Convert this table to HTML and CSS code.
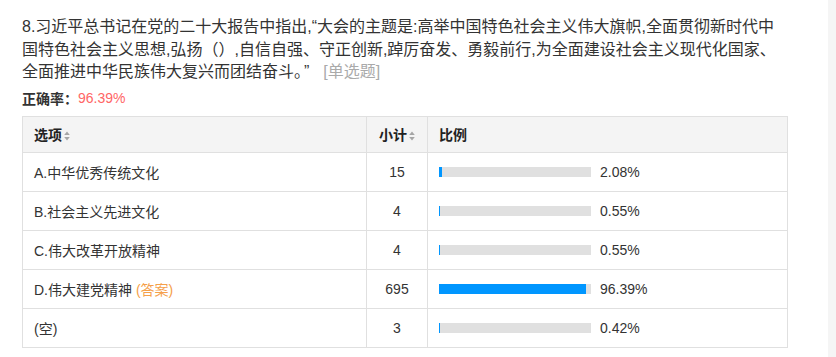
FILE: index.html
```html
<!DOCTYPE html>
<html lang="zh-CN">
<head>
<meta charset="utf-8">
<title>第8题统计</title>
<link rel="stylesheet" href="styles.css">
</head>
<body>
<div class="page">
  <main class="content">
    <div class="question">8.习近平总书记在党的二十大报告中指出,“大会的主题是:高举中国特色社会主义伟大旗帜,全面贯彻新时代中国特色社会主义思想,弘扬（）,自信自强、守正创新,踔厉奋发、勇毅前行,为全面建设社会主义现代化国家、全面推进中华民族伟大复兴而团结奋斗。<span class="quote">”</span><span class="qtype">[单选题]</span></div>
    <div class="accuracy"><b>正确率：</b><span class="rate">96.39%</span></div>
    <table class="stats">
      <colgroup><col class="c1"><col class="c2"><col class="c3"></colgroup>
      <thead>
        <tr>
          <th>选项<svg class="sort" width="6" height="10" viewBox="0 0 6 10"><path d="M3 0.5L5.8 4H0.2Z M3 9.5L5.8 6H0.2Z" fill="#a6a6a6"/></svg></th>
          <th class="num">小计<svg class="sort" width="6" height="10" viewBox="0 0 6 10"><path d="M3 0.5L5.8 4H0.2Z M3 9.5L5.8 6H0.2Z" fill="#a6a6a6"/></svg></th>
          <th>比例</th>
        </tr>
      </thead>
      <tbody>
        <tr><td>A.中华优秀传统文化</td><td class="num">15</td><td><div class="ratio"><div class="bar"><div class="fill" style="width:2.08%"></div></div><span>2.08%</span></div></td></tr>
        <tr><td>B.社会主义先进文化</td><td class="num">4</td><td><div class="ratio"><div class="bar"><div class="fill" style="width:0.55%"></div></div><span>0.55%</span></div></td></tr>
        <tr><td>C.伟大改革开放精神</td><td class="num">4</td><td><div class="ratio"><div class="bar"><div class="fill" style="width:0.55%"></div></div><span>0.55%</span></div></td></tr>
        <tr><td>D.伟大建党精神 <span class="answer">(答案)</span></td><td class="num">695</td><td><div class="ratio"><div class="bar"><div class="fill" style="width:96.39%"></div></div><span>96.39%</span></div></td></tr>
        <tr><td>(空)</td><td class="num">3</td><td><div class="ratio"><div class="bar"><div class="fill" style="width:0.42%"></div></div><span>0.42%</span></div></td></tr>
      </tbody>
    </table>
  </main>
  <div class="scrolltrack"></div>
</div>
</body>
</html>
```
FILE: styles.css
```css
html, body {
  margin: 0;
  padding: 0;
  background: #fff;
}
body {
  font-family: "Liberation Sans", "Noto Sans CJK SC", sans-serif;
  color: #333;
}
.page {
  display: flex;
  height: 357px;
  overflow: hidden;
}
.content {
  flex: 1;
  padding: 16px 0 0 22px;
}
.scrolltrack {
  width: 8px;
  background: #f5f5f5;
}
.question {
  font-size: 16px;
  line-height: 22.5px;
  height: 67.5px;
  width: 760px;
  color: #333;
}
.quote {
  margin-left: 2px;
  margin-right: 14px;
}
.qtype {
  color: #aaa;
}
.accuracy {
  display: flex;
  align-items: center;
  height: 20px;
  margin-top: 4px;
  font-size: 14px;
}
.accuracy b {
  font-weight: bold;
  color: #333;
}
.rate {
  color: #f66;
}
.stats {
  margin-top: 8px;
  border-collapse: collapse;
  table-layout: fixed;
  width: 765px;
  font-size: 14px;
}
.c1 { width: 344px; }
.c2 { width: 61px; }
.c3 { width: 360px; }
.stats th, .stats td {
  border: 1px solid #e0e0e0;
  padding: 0 11px;
  text-align: left;
  vertical-align: middle;
}
.stats th {
  background: #f4f4f4;
  height: 35px;
  font-weight: bold;
  color: #222;
}
.stats td {
  height: 38px;
}
.stats .num {
  text-align: center;
  padding: 0;
}
.sort {
  margin-left: 2px;
  vertical-align: -1px;
}
.answer {
  color: #f5a04a;
}
.ratio {
  display: flex;
  align-items: center;
  gap: 9px;
}
.bar {
  width: 152px;
  height: 10px;
  background: #e0e0e0;
}
.fill {
  height: 100%;
  min-width: 1px;
  background: #0096ff;
}
```
